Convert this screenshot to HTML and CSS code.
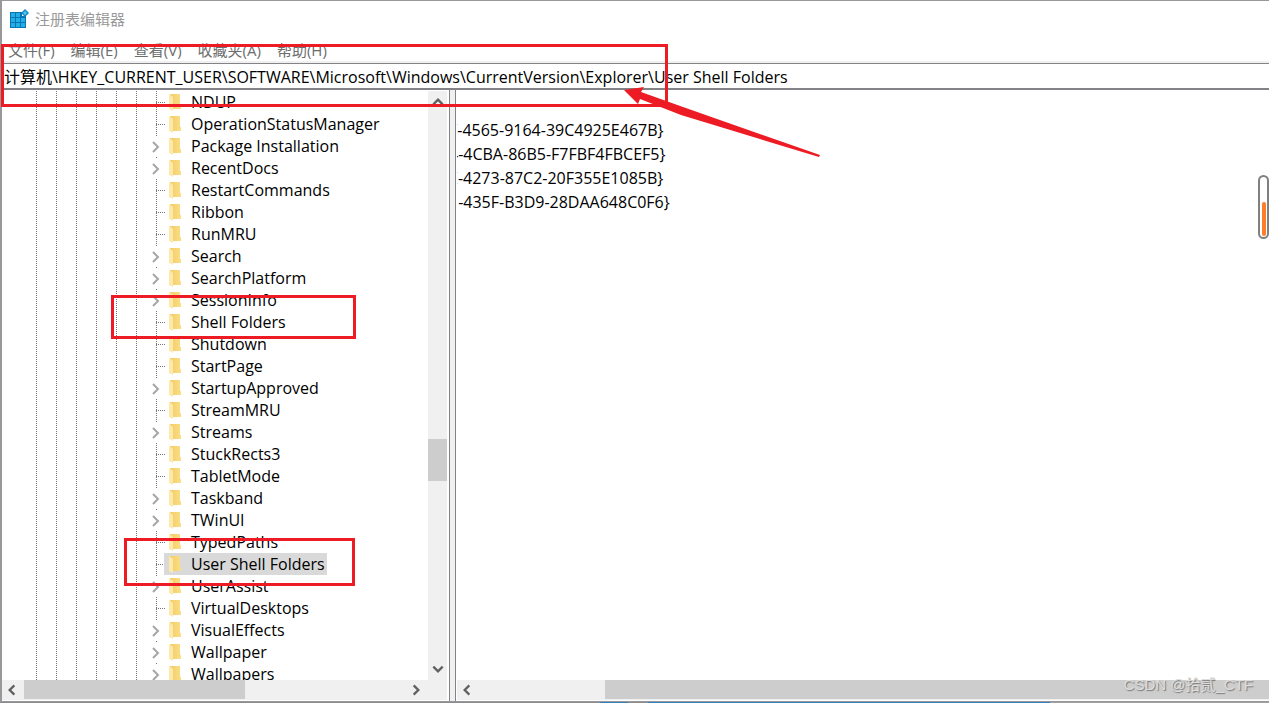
FILE: index.html
```html
<!DOCTYPE html>
<html lang="zh-CN">
<head>
<meta charset="utf-8">
<title>注册表编辑器</title>
<link rel="stylesheet" href="styles.css">
</head>
<body>
<svg class="defs" aria-hidden="true">
  <defs>
    <linearGradient id="gold" x1="0" x2="1"><stop offset="0" stop-color="#f3cd68"/><stop offset="1" stop-color="#fade86"/></linearGradient>
    <symbol id="folder" viewBox="0 0 12 17"><path d="M1 0h10v11h1v4H3z" fill="url(#gold)"/><path d="M0 0l4 3v14l-4-2z" fill="#ffe9a9"/></symbol>
    <symbol id="chev" viewBox="0 0 12 12"><path d="M4 2l4 4-4 4" fill="none" stroke="currentColor" stroke-width="2"/></symbol>
    <symbol id="expand" viewBox="0 0 12 12"><path d="M3 1l5 5-5 5" fill="none" stroke="currentColor" stroke-width="2"/></symbol>
  </defs>
</svg>
<div class="window">
  <header class="title">
    <svg class="app-icon" viewBox="0 0 20 20"><path d="M1 3h12v4h4v12H1z" fill="#0873b5"/><g fill="#20aee5"><path d="M2 4h4v4H2zM7 4h4v4H7zM2 9h4v4H2zM7 9h4v4H7zM12 9h4v4h-4zM2 14h4v4H2zM7 14h4v4H7zM12 14h4v4h-4z"/></g><path d="M16 0l4 4-4 4-4-4z" fill="#1688c4"/><path d="M16 2l2 2-2 2-2-2z" fill="#54c3ed"/></svg>
    <h1>注册表编辑器</h1>
  </header>
  <nav class="menu">
    <button>文件(F)</button><button>编辑(E)</button><button>查看(V)</button><button>收藏夹(A)</button><button>帮助(H)</button>
  </nav>
  <input class="address" aria-label="地址" value="计算机\HKEY_CURRENT_USER\SOFTWARE\Microsoft\Windows\CurrentVersion\Explorer\User Shell Folders">
  <main class="panes">
    <section class="left">
      <div class="tree-area">
        <div class="tree">
          <div class="guides"><i></i><i></i><i></i><i></i><i></i><i></i></div>
          <ul class="keys" id="keys"></ul>
        </div>
        <div class="vbar">
          <button aria-label="向上"><svg class="up"><use href="#chev"/></svg></button>
          <div class="vtrack"><div class="vthumb"></div></div>
          <button aria-label="向下"><svg class="down"><use href="#chev"/></svg></button>
        </div>
      </div>
      <div class="hbar">
        <button aria-label="向左"><svg class="back"><use href="#chev"/></svg></button>
        <div class="htrack"><div class="hthumb"></div></div>
        <button aria-label="向右"><svg><use href="#chev"/></svg></button>
        <div class="corner"></div>
      </div>
    </section>
    <div class="splitter"></div>
    <section class="right">
      <div class="values">
        <table>
          <tr><td>F-4565-9164-39C4925E467B}</td></tr>
          <tr><td>4-4CBA-86B5-F7FBF4FBCEF5}</td></tr>
          <tr><td>E-4273-87C2-20F355E1085B}</td></tr>
          <tr><td>&numsp;-435F-B3D9-28DAA648C0F6}</td></tr>
        </table>
      </div>
      <div class="hbar">
        <button aria-label="向左"><svg class="back"><use href="#chev"/></svg></button>
        <div class="htrack far"><div class="hthumb rest"></div></div>
      </div>
    </section>
  </main>
</div>
<div class="behind"></div>
<div class="mark mark-path"></div>
<div class="mark mark-shell"></div>
<div class="mark mark-user"></div>
<svg class="arrow" viewBox="0 0 200 74"><path d="M0 3L20 0l-3 5 42 15 137 48-1 2L57 28 16 12l-2 5z" fill="#ed1c24"/></svg>
<div class="gauge"><div></div></div>
<div class="watermark">CSDN @拾贰_CTF</div>
<script src="tree.js"></script>
</body>
</html>
```
FILE: styles.css
```css
* { box-sizing: border-box; }
body {
  margin: 0;
  height: 100vh;
  display: flex;
  flex-direction: column;
  position: relative;
  overflow: hidden;
  background: #fff;
  color: #000;
  font: 16px/22px "Open Sans", "Noto Sans CJK SC", sans-serif;
}
button { border: 0; padding: 0; background: none; font: inherit; color: inherit; }
.defs { position: absolute; width: 0; height: 0; }
.window {
  flex: 1;
  min-height: 0;
  display: flex;
  flex-direction: column;
  border: solid #98989c;
  border-width: 1px 0 1px 2px;
}
.title { display: flex; align-items: center; gap: 6px; height: 39px; padding: 0 0 3px 7px; color: #999; font-size: 15px; }
.title h1 { margin: 0; font: inherit; }
.app-icon { width: 20px; height: 20px; }
.menu { display: flex; gap: 16px; height: 23px; padding: 0 0 2px 6px; color: #6d6d6d; line-height: 20px; border-bottom: 2px solid #f0f0f0; font-size: 15px; }
.address {
  width: 100%;
  height: 27px;
  border: solid #828287;
  border-width: 1px 0 2px;
  padding: 0 2px 1px;
  outline: 0;
  font: inherit;
  color: #000;
}
.panes { flex: 1; min-height: 0; display: flex; }
.left { width: 448px; display: flex; flex-direction: column; border-right: 1px solid #828287; padding: 1px 2px 1px 0; }
.splitter { width: 5px; background: #f0f0f0; }
.right { flex: 1; min-width: 0; display: flex; flex-direction: column; border-left: 1px solid #828287; padding: 1px 0 1px 1px; }
.tree-area { flex: 1; min-height: 0; display: flex; }
.tree { flex: 1; min-width: 0; overflow: hidden; display: flex; padding-left: 34px; }
.guides { display: flex; }
.guides i { width: 20px; background: repeating-linear-gradient(#777 0 1px, #fff 1px 2px) 0 0 / 1px 100% no-repeat; }
.keys { list-style: none; margin: 0; padding: 0; }
.keys li { display: flex; height: 22px; margin-left: -6px; }
.node { width: 16px; flex: none; display: flex; color: #a6a6a6; }
.node svg { width: 12px; height: 12px; margin-top: 6px; }
.leaf {
  background:
    repeating-linear-gradient(#777 0 1px, transparent 1px 2px) 6px 0 / 1px 100% no-repeat,
    repeating-linear-gradient(90deg, #777 0 1px, transparent 1px 2px) 6px 11px / 10px 1px no-repeat;
}
.open { background: linear-gradient(#777, #777) 6px 0 / 1px 1px no-repeat; }
.key { display: flex; margin-left: -2px; padding: 0 2px 0 5px; white-space: nowrap; }
.key svg { width: 12px; height: 17px; margin: 3px 10px 0 0; }
.selected { background: #d9d9d9; }
.vbar { width: 19px; background: #f0f0f0; display: flex; flex-direction: column; }
.vbar button, .hbar button { display: flex; align-items: center; justify-content: center; width: 20px; height: 20px; flex: none; color: #606060; }
.vbar button { width: 19px; height: 22px; }
.vbar svg, .hbar svg { width: 14px; height: 14px; }
.up { transform: rotate(-90deg); }
.down { transform: rotate(90deg); }
.back { transform: rotate(180deg); }
.vtrack { flex: 1; display: flex; flex-direction: column; }
.vtrack::before { content: ""; flex: 326; }
.vtrack::after { content: ""; flex: 177; }
.vthumb { height: 42px; background: #cdcdcd; }
.hbar { height: 20px; display: flex; background: #f0f0f0; }
.htrack { flex: 1; padding: 0 0 1px 2px; }
.hthumb { width: 221px; height: 100%; background: #cdcdcd; }
.corner { width: 21px; }
.far { padding-left: 128px; }
.rest { width: 100%; }
.values { flex: 1; overflow: hidden; padding-top: 27px; }
.values table { border-collapse: collapse; margin-left: -8px; }
.values td { height: 24px; padding: 0; white-space: nowrap; }
.behind { height: 1px; background: linear-gradient(90deg, #8c8c8c 600px, #3a80b8 600px 628px, #8c8c8c 628px 648px, #3a80b8 648px 1050px, #a0a0a0 1050px); }
.mark { position: absolute; border: 3px solid #ed1c24; }
.mark-path { left: 1px; top: 44px; width: 667px; height: 63px; }
.mark-shell { left: 111px; top: 295px; width: 245px; height: 44px; }
.mark-user { left: 124px; top: 538px; width: 231px; height: 48px; }
.arrow { position: absolute; left: 624px; top: 87px; width: 200px; height: 74px; }
.gauge { position: absolute; right: 0; top: 175px; width: 11px; height: 64px; border: 2px solid #808080; border-radius: 6px; padding: 25px 1px 1px 2px; background: #fff; }
.gauge div { height: 100%; background: #ff7c2b; border-radius: 2px; }
.watermark { position: absolute; right: 16px; bottom: 7px; font: 15px/22px "Liberation Sans", "Noto Sans CJK SC", sans-serif; color: #dedede; text-shadow: 1px 1px 1px #777; }
```
FILE: tree.js
```js
const names = [
  "NDUP", "OperationStatusManager", "+Package Installation", "+RecentDocs", "RestartCommands",
  "Ribbon", "RunMRU", "+Search", "+SearchPlatform", "+SessionInfo", "Shell Folders", "Shutdown",
  "StartPage", "+StartupApproved", "StreamMRU", "+Streams", "StuckRects3", "TabletMode",
  "+Taskband", "+TWinUI", "TypedPaths", "User Shell Folders", "+UserAssist", "VirtualDesktops",
  "+VisualEffects", "+Wallpaper", "+Wallpapers"
];
document.getElementById("keys").innerHTML = names.map(entry => {
  const expandable = entry[0] === "+";
  const name = expandable ? entry.slice(1) : entry;
  const node = expandable
    ? `<button class="node open" aria-label="展开 ${name}"><svg><use href="#expand"/></svg></button>`
    : `<span class="node leaf"></span>`;
  const selected = name === "User Shell Folders" ? " selected" : "";
  return `<li>${node}<button class="key${selected}"><svg><use href="#folder"/></svg>${name}</button></li>`;
}).join("");
```
